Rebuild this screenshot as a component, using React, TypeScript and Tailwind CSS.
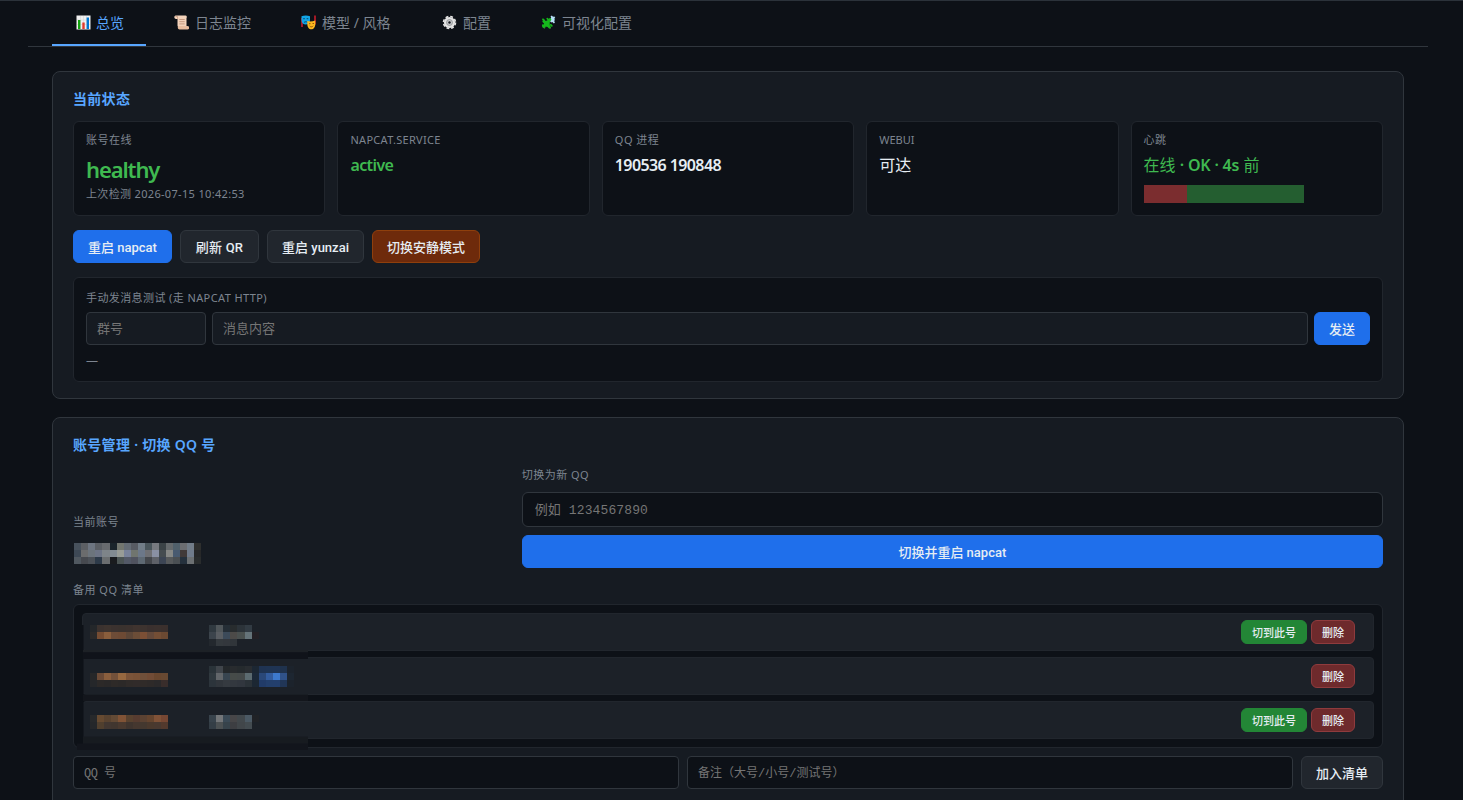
import React from "react";
import clsx from "clsx";

const ChartIcon = () => (
  <svg width="15" height="15" viewBox="0 0 15 15">
    <rect x="0.5" y="0.5" width="14" height="14" fill="#f1f1f1" />
    <path d="M4.5 1v13M7.5 1v13M10.5 1v13M1 5h13M1 9.500h13" stroke="#d3d6d8" strokeWidth="0.6" />
    <rect x="2" y="5" width="2.4" height="9" fill="#13a10e" />
    <rect x="6.300" y="7.500" width="2.400" height="6.500" fill="#e23b2e" />
    <rect x="10.600" y="2.500" width="2.400" height="11.500" fill="#0078d4" />
  </svg>
);

const ScrollIcon = () => (
  <svg width="15" height="15" viewBox="0 0 15 15">
    <path d="M1.500 0.500h10a1.500 1.500 0 0 1 1 2.500V12.500H5a2 2 0 0 1-1.500-2V4H2A1.800 1.800 0 0 1 1.500.500z" fill="#f3d3bb" />
    <path d="M5 11h8.500a1.600 1.600 0 0 1 0 3.500H5.500A1.800 1.800 0 0 1 5 11z" fill="#e8bd9f" />
    <path d="M5.300 4.500h5.400M5.300 6.700h5.400M5.300 8.900h5.400" stroke="#b98c72" strokeWidth="0.8" />
    <path d="M1.500 1.500h2v2.400" stroke="#c79a80" strokeWidth="0.8" fill="none" />
  </svg>
);

const MasksIcon = () => (
  <svg width="15" height="15" viewBox="0 0 15 15">
    <path d="M1 3v9M14 0.500v9" stroke="#c81c2b" strokeWidth="1.600" />
    <path d="M0.500 1.200C3 .2 6.500.2 9 1.200V5c0 3-2 4.500-4.300 4.500S.500 8 .500 5z" fill="#12a5e6" />
    <path d="M2.200 3.700h1.600M5.700 3.700h1.600M3 7.500c1-1 2.500-1 3.500 0" stroke="#08405e" strokeWidth="0.9" fill="none" />
    <path d="M6.300 6c2.500.6 5 .6 8-.6V9c0 3-1.600 5.300-4 5.300S6.300 12 6.300 9z" fill="#fbb81f" />
    <path d="M8 8.700h1.500M11.500 8.500H13M8.700 11c1 1.200 2.600 1.100 3.400-.2" stroke="#8a4b08" strokeWidth="0.9" fill="none" />
  </svg>
);

const GearIcon = () => (
  <svg width="15" height="15" viewBox="0 0 15 15">
    <circle cx="7.500" cy="7.500" r="6" fill="none" stroke="#e2e2e2" strokeWidth="1.600" strokeDasharray="2.800 1.912" />
    <circle cx="7.500" cy="7.500" r="5.600" fill="#e2e2e2" />
    <circle cx="7.500" cy="7.500" r="3" fill="#c4c6c8" stroke="#85898d" strokeWidth="0.7" />
    <circle cx="7.500" cy="7.500" r="1.200" fill="#16191f" />
  </svg>
);

const PuzzleIcon = () => (
  <svg width="15" height="15" viewBox="0 0 15 15">
    <path d="M8.300 5.200l1.900-2.500-.7-1.300 1.300-.9 1.200 1.300 1.400-.4.900 1.500-1.200.8.900 1.400-1 .9 1 1.300-1.100 1.300-1.600-1.500-1.200.500z" fill="#b4dff5" />
    <g stroke="#16b81c" strokeLinecap="round">
      <path d="M2.700 6.300L8.700 12.300M9 4.500L2.500 11.500" strokeWidth="2.600" />
      <path d="M4 6.500h4v4.500H4z" strokeWidth="1.500" fill="#16b81c" />
      <path d="M2 4.300l1.200 1.200M1.800 10.300l1.700 2.200M6.300 3.700l1.700 1.600M9.800 9.800l1 1" strokeWidth="1.800" />
    </g>
    <path d="M8.500 13.300l1.300.2M2.800 13.500l1-.6" stroke="#3d5340" strokeWidth="0.8" />
  </svg>
);

const tabs = [
  { icon: <ChartIcon />, label: "总览", width: "w-[94px]", active: true },
  { icon: <ScrollIcon />, label: "日志监控", width: "w-[123px]" },
  { icon: <MasksIcon />, label: "模型 / 风格", width: "w-[137px]" },
  { icon: <GearIcon />, label: "配置", width: "w-[95px]" },
  { icon: <PuzzleIcon />, label: "可视化配置", width: "w-[137px]" },
];

const Label = ({ children, className }: { children: React.ReactNode; className?: string }) => (
  <div className={clsx("text-[11px] leading-[15px] text-[#7d8590]", className ?? "tracking-[0.5px]")}>
    {children}
  </div>
);

const variants = {
  default: "bg-[#21262d] border-[#30363d] text-[#e6edf3]",
  primary: "bg-[#1f6feb] border-[#1f6feb] text-[#e6edf3]",
  warn: "bg-[#6e2a0b] border-[#8f3f0c] text-[#e6edf3]",
  ok: "bg-[#238636] border-[#238636] text-[#e6edf3]",
  danger: "bg-[#6e2a2c] border-[#8f3b3d] text-[#e6edf3]",
};

const Button = ({
  children,
  variant = "default",
  className,
}: {
  children: React.ReactNode;
  variant?: keyof typeof variants;
  className?: string;
}) => (
  <button
    className={clsx(
      "flex h-[33px] shrink-0 items-center justify-center whitespace-nowrap rounded-md border pt-0.5 font-['Roboto','Noto_Sans_CJK_SC',sans-serif] text-[13px] font-medium",
      variants[variant],
      className
    )}
  >
    {children}
  </button>
);

const SmallButton = ({ children, variant, className }: React.ComponentProps<typeof Button>) => (
  <button
    className={clsx(
      "h-6 rounded-md border pt-0.5 font-['Roboto','Noto_Sans_CJK_SC',sans-serif] text-[11px] leading-none font-medium",
      variants[variant ?? "default"],
      className
    )}
  >
    {children}
  </button>
);

const Tile = ({ label, tracking, children }: { label: string; tracking?: string; children: React.ReactNode }) => (
  <div className="h-[95px] rounded-md border border-[#21262d] bg-[#0d1117] px-3 pt-2.5">
    <Label className={tracking}>{label}</Label>
    {children}
  </div>
);

const Card = ({ title, className, children }: { title: string; className?: string; children: React.ReactNode }) => (
  <section className={clsx("rounded-lg border border-[#30363d] bg-[#161b22] px-5", className)}>
    <h2 className="pt-[17px] text-[14px] leading-5 font-semibold tracking-[0.3px] text-[#58a6ff]">{title}</h2>
    {children}
  </section>
);

const CELL = 7.04;

// One entry per row of cells, "" leaves a cell clear
const Mosaic = ({ x, y, rows }: { x: number; y: number; rows: string[][] }) => (
  <g shapeRendering="crispEdges">
    {rows.map((row, r) =>
      row.map((fill, c) =>
        fill ? <rect key={`${r}-${c}`} x={x + c * CELL} y={y + r * 7} width={CELL} height={7} fill={fill} /> : null
      )
    )}
  </g>
);

const accountCells = [
  "#47515c #5c5f64 #6d7581 #5b5f65 #686b6f #1a242b #72766f #646c75 #575b63 #717d88 #4a565c #777a80 #3b4347 #656a6d #50606b #6c6e72 #727d89 #2e2f2e",
  "#3d4855 #6b6c6d #6c747c #6d7485 #7e8489 #828b92 #989c96 #78829a #70756f #6c7889 #6f7074 #8990a3 #454c50 #868886 #485a70 #413a39 #707b8b #272829",
  "#505860 #46494f #4c5158 #2d3a49 #6b6e70 #191b1e #4b5454 #535967 #50535f #5e6973 #44474c #5e6168 #3c4554 #56595b #4a4f53 #25313d #6c7073 #292c2d",
].map((row) => row.split(" "));

const idCells = [
  [
    "#24272a #3b322f #3e342f #3b322f #3a322e #3c322e #40342f #3d332f #3a302e #3b312e #3b302d",
    "#2b2a2a #754c32 #8a5e3c #6d4c37 #6d4a34 #5c4637 #6b4d37 #7c4f35 #65493a #744e35 #6b4932",
  ],
  [
    "#262729 #6a4a37 #8a5e3d #73513a #966840 #7b5439 #795237 #70503a #714c36 #69472f #684932",
    "#25272a #2c2928 #2a2828 #2e2a28 #2c2928 #302b29 #312b2a #302b29 #2e2a29 #2b292a #392d2b",
  ],
  [
    "#27292b #664a31 #594330 #634a35 #805336 #59422f #573c30 #5b4232 #65452f #805237 #764733",
    "#25272a #503f2e #423731 #41362f #49392f #3f342e #45372f #44382f #4a392d #493930 #52392d",
  ],
].map((rows) => rows.map((row) => row.split(" ")));

const noteCells = [
  [
    ["#303940", "#50565a", "#252e36", "#282c2e", "#2c3339", "#323b43"],
    ["#3c444c", "#595d62", "#3c4a59", "#4c4a48", "#4a504f", "#657379", "#231f24"],
    ["#23282e", "#34393e", "#33373d", "#30353a"],
  ],
  [
    ["#2a3339", "#40454b", "#24282b", "#282b2e", "#252a2d", "#292d31"],
    ["#30393f", "#62666a", "#384550", "#464b49", "#454a4a", "#5c6b70"],
    ["#2c343b", "#31363c", "#353a40", "#33383f", "#31363e", "#2b3238"],
  ],
  [
    ["#38434c", "#737679", "#3b4a56", "#474648", "#42484c", "#4b5964", "#202226"],
    ["#343e46", "#4c5153", "#37434b", "#3d3e42", "#41464a", "#434b50"],
  ],
];

const tagCells = [
  ["#1c2733", "#1f3352", "#1f3453", "#1f3454", "#1f324d", "#1c232c"],
  ["#1c2938", "#2a4879", "#335c9e", "#3d79cd", "#305289", "#1d2631"],
  ["#1c2733", "#213b68", "#233f6c", "#233f6d", "#213657", "#1c232c"],
];

const accounts = [{ id: 1, switchable: true }, { id: 2, switchable: false }, { id: 3, switchable: true }];

export default function App() {
  return (
    <div className="h-[800px] w-full overflow-hidden border-t border-[#2b323a] bg-[#0d1117] font-['Noto_Sans','Noto_Sans_CJK_SC',sans-serif] text-[#e6edf3]">
      <nav className="ml-7 flex h-[46px] w-[1400px] gap-1 border-b border-[#30363d] pl-6">
        {tabs.map((tab) => (
          <a
            key={tab.label}
            className={clsx(
              "flex h-[45px] items-center whitespace-nowrap border-b-2 pl-[24px] text-[14px]",
              tab.width,
              tab.active ? "gap-[5px] border-[#58a6ff] text-[#58a6ff]" : "gap-1.5 border-transparent text-[#7d8590]"
            )}
          >
            <span className="w-[15px] shrink-0">{tab.icon}</span>
            {tab.label}
          </a>
        ))}
      </nav>

      <main className="ml-[52px] mt-6 flex w-[1352px] flex-col gap-[18px]">
        <Card title="当前状态" className="h-[328px]">
          <div className="mt-3 grid grid-cols-5 gap-3">
            <Tile label="账号在线">
              <div className="mt-[8px] text-[22px] leading-7 font-semibold tracking-[-1.1px] text-[#3fb950]">healthy</div>
              <div className="mt-[3px] text-[11px] leading-[15px] tracking-[0.33px] text-[#7d8590]">
                上次检测 2026-07-15 10:42:53
              </div>
            </Tile>
            <Tile label="NAPCAT.SERVICE" tracking="tracking-[0.3px]">
              <div className="mt-[7px] text-[16px] leading-[22px] font-semibold tracking-[-0.6px] text-[#3fb950]">active</div>
            </Tile>
            <Tile label="QQ 进程">
              <div className="mt-[7px] text-[16px] leading-[22px] font-semibold tracking-[-0.6px]">190536 190848</div>
            </Tile>
            <Tile label="WEBUI" tracking="tracking-[0px]">
              <div className="mt-[7px] text-[16px] leading-[22px]">可达</div>
            </Tile>
            <Tile label="心跳">
              <div className="mt-[7px] text-[16px] leading-[22px] text-[#3fb950]">
                在线 <b className="font-semibold tracking-[-0.2px]">· OK · 4s</b> 前
              </div>
              <div className="mt-[9px] flex h-[18px] w-40">
                <div className="w-[43px] bg-[#7b2d2f]" />
                <div className="flex-1 bg-[#245e30]" />
              </div>
            </Tile>
          </div>

          <div className="mt-3.5 flex gap-2">
            <Button variant="primary" className="w-[99px]">重启 napcat</Button>
            <Button className="w-[79px] tracking-[0.2px]">刷新 QR</Button>
            <Button className="w-[97px]">重启 yunzai</Button>
            <Button variant="warn" className="w-[108px]">切换安静模式</Button>
          </div>

          <div className="mt-3.5 h-[105px] rounded-md border border-[#21262d] bg-[#0d1117] px-3 pt-3">
            <Label className="tracking-[0.4px]">手动发消息测试 (走 NAPCAT HTTP)</Label>
            <div className="mt-[7px] flex gap-1.5">
              <input
                placeholder="群号"
                className="h-[33px] w-[120px] rounded border border-[#30363d] bg-[#161b22] px-2.5 pb-0.5 text-[13px] placeholder:text-[#757575]"
              />
              <input
                placeholder="消息内容"
                className="h-[33px] flex-1 rounded border border-[#30363d] bg-[#161b22] px-2.5 pb-0.5 text-[13px] placeholder:text-[#757575]"
              />
              <Button variant="primary" className="w-14">发送</Button>
            </div>
            <div className="mt-[8px] text-[12px] leading-4 text-[#7d8590]">—</div>
          </div>
        </Card>

        <Card title="账号管理 · 切换 QQ 号" className="h-[480px]">
          <div className="mt-3 grid grid-cols-[1fr_2fr] items-end gap-[18px]">
            <div>
              <Label>当前账号</Label>
              <svg className="mt-3.5 mb-[3px] block" width="130" height="22">
                <Mosaic x={1.3} y={0} rows={accountCells} />
              </svg>
            </div>
            <div>
              <Label>切换为新 QQ</Label>
              <input
                placeholder="例如 1234567890"
                className="mt-2.5 block h-[35px] w-full rounded-md border border-[#30363d] bg-[#0d1117] px-3 pt-0.5 font-['Liberation_Mono','Noto_Sans_CJK_SC',monospace] text-[13px] tracking-[0.12px] placeholder:text-[#757575]"
              />
              <Button variant="primary" className="mt-2 w-full">切换并重启 napcat</Button>
            </div>
          </div>

          <Label className="mt-3.5 tracking-[0.5px]">备用 QQ 清单</Label>
          <div className="relative mt-[7px] flex flex-col gap-1.5 rounded-md border border-[#21262d] bg-[#0d1117] p-2">
            {accounts.map((account) => (
              <div
                key={account.id}
                className="flex h-[38px] items-center justify-end gap-1 rounded border border-[#21262d] bg-[#1c2128] pr-[18px]"
              >
                {account.switchable && <SmallButton variant="ok" className="w-[66px]">切到此号</SmallButton>}
                <SmallButton variant="danger" className="w-11">删除</SmallButton>
              </div>
            ))}
            <svg className="absolute -left-px -top-px" width="236" height="146">
              <path d="M9 21h1.500v114H9z" fill="#0d1117" />
              <path d="M10 46h225v2.500H10z" fill="#1d2126" />
              <path d="M10 48.500h225V55H10z" fill="#10131a" />
              <path d="M10 90.500h225V97H10z" fill="#13161c" />
              <path d="M10 132.500h225V140H10z" fill="#171b20" />
              <path d="M4 139.500h231v6.500H4z" fill="#12151c" />
              <Mosaic x={17.3} y={21} rows={idCells[0]} />
              <Mosaic x={17.3} y={69.200} rows={idCells[1]} />
              <Mosaic x={17.3} y={111} rows={idCells[2]} />
              <Mosaic x={136.3} y={21} rows={noteCells[0]} />
              <Mosaic x={136.3} y={62.400} rows={noteCells[1]} />
              <Mosaic x={136.3} y={111} rows={noteCells[2]} />
              <Mosaic x={178.500} y={62.400} rows={tagCells} />
            </svg>
          </div>

          <div className="mt-2 flex gap-2">
            <input
              placeholder="QQ 号"
              className="h-[33px] w-[606px] rounded border border-[#30363d] bg-[#0d1117] px-2.5 pt-0.5 font-['Liberation_Mono','Noto_Sans_CJK_SC',monospace] text-[12px] tracking-[-0.5px] placeholder:text-[#757575]"
            />
            <input
              placeholder="备注（大号/小号/测试号）"
              className="h-[33px] w-[606px] rounded border border-[#30363d] bg-[#0d1117] px-2.5 pt-0.5 font-['Liberation_Mono','Noto_Sans_CJK_SC',monospace] text-[12px] placeholder:text-[#757575]"
            />
            <Button className="flex-1">加入清单</Button>
          </div>
        </Card>
      </main>
    </div>
  );
}
